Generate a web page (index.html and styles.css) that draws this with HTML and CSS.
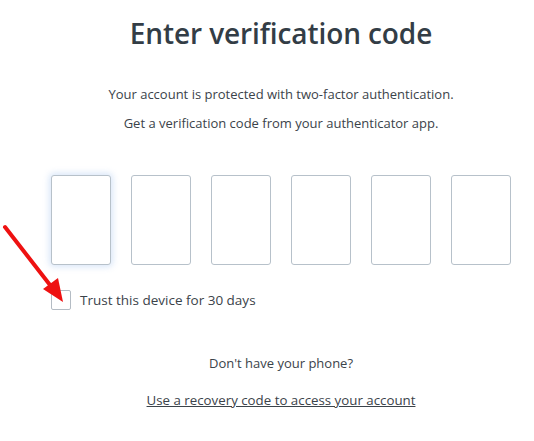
FILE: index.html
```html
<!DOCTYPE html>
<html>
<head>
<meta charset="utf-8">
<link rel="stylesheet" href="styles.css">
</head>
<body>
<div class="page">
  <h1 class="title">Enter verification code</h1>
  <p class="lead first">Your account is protected with two-factor authentication.</p>
  <p class="lead second">Get a verification code from your authenticator app.</p>
  <div class="codes">
    <div class="code focus"></div>
    <div class="code"></div>
    <div class="code"></div>
    <div class="code"></div>
    <div class="code"></div>
    <div class="code"></div>
  </div>
  <label class="trust"><span class="box"></span><span class="trust-text">Trust this device for 30 days</span></label>
  <p class="nophone">Don't have your phone?</p>
  <p class="recovery"><a href="#">Use a recovery code to access your account</a></p>
</div>
<svg class="arrow" width="80" height="90" viewBox="0 0 80 90">
  <line x1="5" y1="7" x2="50" y2="65" stroke="#ee1111" stroke-width="4" stroke-linecap="round"/>
  <polygon points="63,82 43,69 58,58" fill="#ee1111"/>
</svg>
</body>
</html>
```
FILE: styles.css
```css
html, body {
  margin: 0;
  padding: 0;
  background: #ffffff;
}
body {
  font-family: "Open Sans", "Liberation Sans", sans-serif;
  color: #3b434a;
  position: relative;
  width: 534px;
  height: 441px;
  overflow: hidden;
}
.page {
  width: 460px;
  margin-left: 51px;
  padding-top: 14px;
  display: flex;
  flex-direction: column;
}
.title {
  margin: 0;
  text-align: center;
  font-size: 28px;
  line-height: 38px;
  font-weight: 600;
  letter-spacing: -0.1px;
  color: #333d46;
}
.lead {
  margin: 0;
  text-align: center;
  font-size: 13px;
  line-height: 18px;
}
.lead.first { margin-top: 33px; }
.lead.second { margin-top: 11px; }
.codes {
  display: flex;
  gap: 20px;
  margin-top: 43px;
}
.code {
  width: 58px;
  height: 88px;
  border: 1px solid #b7c1ca;
  border-radius: 3px;
  background: #fff;
}
.code.focus {
  box-shadow: 0 0 6px 2px rgba(170, 200, 240, 0.45);
}
.trust {
  display: flex;
  align-items: center;
  margin-top: 25px;
}
.box {
  width: 18px;
  height: 18px;
  border: 1px solid #b4bcc4;
  border-radius: 2px;
  flex: none;
}
.trust-text {
  margin-left: 9px;
  font-size: 13.5px;
  color: #3b434a;
}
.nophone {
  margin: 44px 0 0;
  text-align: center;
  font-size: 13px;
  line-height: 18px;
}
.recovery {
  margin: 19px 0 0;
  text-align: center;
  font-size: 13.3px;
  line-height: 18px;
}
.recovery a {
  color: #3b434a;
  text-decoration: underline;
}
.arrow {
  position: absolute;
  left: 0;
  top: 220px;
}
```
